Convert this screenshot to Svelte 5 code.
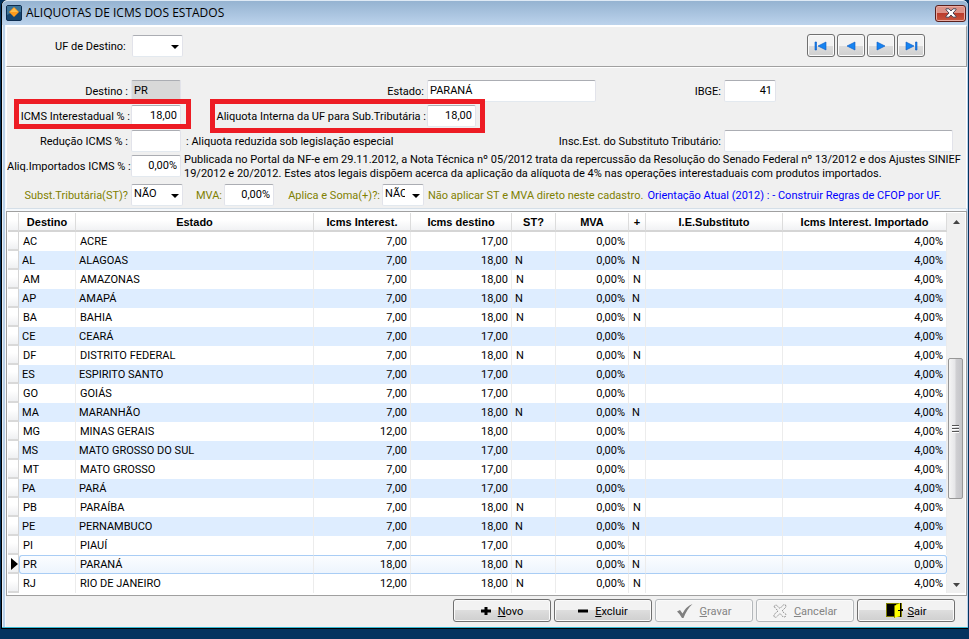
<script>
  const rates = [
    ['AC', 'ACRE', '7,00', '17,00', '', '4,00%'],
    ['AL', 'ALAGOAS', '7,00', '18,00', 'N', '4,00%'],
    ['AM', 'AMAZONAS', '7,00', '18,00', 'N', '4,00%'],
    ['AP', 'AMAPÁ', '7,00', '18,00', 'N', '4,00%'],
    ['BA', 'BAHIA', '7,00', '18,00', 'N', '4,00%'],
    ['CE', 'CEARÁ', '7,00', '17,00', '', '4,00%'],
    ['DF', 'DISTRITO FEDERAL', '7,00', '18,00', 'N', '4,00%'],
    ['ES', 'ESPIRITO SANTO', '7,00', '17,00', '', '4,00%'],
    ['GO', 'GOIÁS', '7,00', '17,00', '', '4,00%'],
    ['MA', 'MARANHÃO', '7,00', '18,00', 'N', '4,00%'],
    ['MG', 'MINAS GERAIS', '12,00', '18,00', '', '4,00%'],
    ['MS', 'MATO GROSSO DO SUL', '7,00', '17,00', '', '4,00%'],
    ['MT', 'MATO GROSSO', '7,00', '17,00', '', '4,00%'],
    ['PA', 'PARÁ', '7,00', '17,00', '', '4,00%'],
    ['PB', 'PARAÍBA', '7,00', '18,00', 'N', '4,00%'],
    ['PE', 'PERNAMBUCO', '7,00', '18,00', 'N', '4,00%'],
    ['PI', 'PIAUÍ', '7,00', '17,00', '', '4,00%'],
    ['PR', 'PARANÁ', '18,00', '18,00', 'N', '0,00%'],
    ['RJ', 'RIO DE JANEIRO', '12,00', '18,00', 'N', '4,00%'],
  ];
  let selected = $state('PR');
</script>

<div class="window">
  <header class="titlebar">
    <svg class="logo" width="16" height="16" viewBox="0 0 16 16" aria-hidden="true">
      <rect x=".5" y=".5" width="15" height="15" rx="1.5" fill="#17456f" stroke="#0c2c50" />
      <path d="M1 1h14v6Q8 5 1 10z" fill="#3c7397" />
      <path d="M8 2l5 5-5 5-5-5z" fill="#ff9a1c" />
      <path d="M8 3l4 4H4z" fill="#ffbd4a" />
    </svg>
    <h1>ALIQUOTAS DE ICMS DOS ESTADOS</h1>
    <button class="close" aria-label="Fechar">
      <svg width="12" height="10" viewBox="0 0 12 10" aria-hidden="true">
        <path d="M1 .8h3L6 3l2-2.200h3v1L8 5l3 3.200v1H8L6 7 4 9.200H1v-1L4 5 1 1.800z" fill="#fff" stroke="#4a4656" />
      </svg>
    </button>
  </header>

  <section class="search">
    <label for="uf">UF de Destino:</label>
    <span class="combo"><select id="uf"><option></option><option>PR</option></select></span>
    <nav>
      <button aria-label="Primeiro"><svg width="14" height="10" viewBox="0 0 14 10"><path d="M1 1h1.500v8H1zM12 1v8L4 5z" /></svg></button>
      <button aria-label="Anterior"><svg width="12" height="10" viewBox="0 0 12 10"><path d="M10 1v8L2 5z" /></svg></button>
      <button aria-label="Próximo"><svg width="12" height="10" viewBox="0 0 12 10"><path d="M2 1v8l8-4z" /></svg></button>
      <button aria-label="Último"><svg width="14" height="10" viewBox="0 0 14 10"><path d="M11.500 1H13v8h-1.500zM2 1v8l8-4z" /></svg></button>
    </nav>
  </section>

  <form class="details" onsubmit={(e) => e.preventDefault()}>
    <label for="destino">Destino :</label>
    <input id="destino" class="locked" value="PR" readonly />
    <label for="estado">Estado:</label>
    <input id="estado" value="PARANÁ" />
    <label for="ibge">IBGE:</label>
    <input id="ibge" class="num code" value="41" />

    <div class="marked first">
      <label for="inter">ICMS Interestadual % :</label>
      <input id="inter" class="num" value="18,00" />
    </div>
    <div class="marked second">
      <label for="interna">Aliquota Interna da UF para Sub.Tributária :</label>
      <input id="interna" class="num" value="18,00" />
    </div>

    <label class="start" for="reducao">Redução ICMS % :</label>
    <input id="reducao" class="num" value="" />
    <div class="split">
      <label for="reducao">: Aliquota reduzida sob legislação especial</label>
      <label for="insc">Insc.Est. do Substituto Tributário:</label>
    </div>
    <input id="insc" value="" />

    <label for="import">Aliq.Importados ICMS % :</label>
    <input id="import" class="num" value="0,00%" />
    <p class="note">Publicada no Portal da NF-e em 29.11.2012, a Nota Técnica nº 05/2012 trata da repercussão da Resolução do Senado Federal nº 13/2012 e dos Ajustes SINIEF<br />19/2012 e 20/2012. Estes atos legais dispõem acerca da aplicação da alíquota de 4% nas operações interestaduais com produtos importados.</p>

    <label class="olive last" for="st">Subst.Tributária(ST)?</label>
    <span class="combo last"><select id="st"><option>NÃO</option><option>SIM</option></select></span>
    <div class="options last">
      <label class="olive mva" for="mva">MVA:</label>
      <input id="mva" class="num" value="0,00%" />
      <label class="olive soma" for="soma">Aplica e Soma(+)?:</label>
      <span class="combo narrow"><select id="soma"><option>NÃO</option><option>SIM</option></select></span>
      <span class="hint olive">Não aplicar ST e MVA direto neste cadastro.</span>
      <span class="hint blue">Orientação Atual (2012) : - Construir Regras de CFOP por UF.</span>
    </div>
  </form>

  <section class="grid">
    <table>
      <colgroup>
        <col class="c-mark" /><col class="c-uf" /><col class="c-state" /><col class="c-inter" /><col class="c-dest" />
        <col class="c-st" /><col class="c-mva" /><col class="c-plus" /><col class="c-ie" /><col class="c-imp" />
      </colgroup>
      <thead>
        <tr>
          <th></th><th>Destino</th><th>Estado</th><th>Icms Interest.</th><th>Icms destino</th>
          <th>ST?</th><th>MVA</th><th>+</th><th>I.E.Substituto</th><th>Icms Interest. Importado</th>
        </tr>
      </thead>
      <tbody>
        {#each rates as [uf, state, inter, dest, st, imported]}
          <tr class:selected={uf === selected} onclick={() => (selected = uf)}>
            <td class="mark">
              {#if uf === selected}
                <svg width="7" height="12" viewBox="0 0 7 12" aria-hidden="true"><path d="M0 0l7 6-7 6z" /></svg>
              {/if}
            </td>
            <td>{uf}</td>
            <td>{state}</td>
            <td class="r">{inter}</td>
            <td class="r">{dest}</td>
            <td>{st}</td>
            <td class="r">0,00%</td>
            <td>{st}</td>
            <td></td>
            <td class="r">{imported}</td>
          </tr>
        {/each}
      </tbody>
    </table>
    <div class="scroll">
      <button class="arrow" aria-label="Rolar para cima"><svg width="7" height="4" viewBox="0 0 7 4"><path d="M0 4l3.500-4L7 4z" /></svg></button>
      <div class="before"></div>
      <button class="thumb" aria-label="Barra de rolagem"><i></i><i></i><i></i></button>
      <div class="after"></div>
      <button class="arrow" aria-label="Rolar para baixo"><svg width="7" height="4" viewBox="0 0 7 4"><path d="M0 0l3.500 4L7 0z" /></svg></button>
    </div>
  </section>

  <footer>
    <button>
      <svg width="10" height="10" viewBox="0 0 10 10"><path d="M3.500 1h3v2.500H10v3H6.500V9h-3V6.500H0v-3h3.500z" /></svg>
      <span><u>N</u>ovo</span>
    </button>
    <button>
      <svg width="10" height="10" viewBox="0 0 10 10"><path d="M0 3.500h10v3H0z" /></svg>
      <span><u>E</u>xcluir</span>
    </button>
    <button disabled>
      <svg width="16" height="14" viewBox="0 0 16 14"><path d="M0 7.500l3-1.500 2.500 3.500Q9 2.500 15.500 0 10 5 6.500 14H5Q3 10 0 7.500z" fill="#808080" /></svg>
      <span><u>G</u>ravar</span>
    </button>
    <button disabled>
      <svg width="14" height="14" viewBox="0 0 14 14"><path d="M1 2.500L3 .8 7 4.500 10.500.800h2L13 3 9 7l4 3.500-.5 2-2 .8L7 9.500l-4 4-2-1L.8 10.800 5 7z" fill="#f4f4f4" stroke="#909090" stroke-dasharray="2 1" /></svg>
      <span><u>C</u>ancelar</span>
    </button>
    <button class="exit">
      <svg width="17" height="15" viewBox="0 0 17 15">
        <path d="M0 0h16v14H0z" fill="#808000" /><path d="M1 1h9v12H1z" />
        <path d="M8 3l6-3v13l-6 2z" fill="#ff0" />
        <path d="M8 3l1-.5v12l-1 .5z" fill="#808000" />
        <path d="M14 0h1v14h-1zM12 7h2v1h-2zM15 6h2v2h-2z" />
      </svg>
      <span><u>S</u>air</span>
    </button>
  </footer>
</div>

<style>
  :global(body) {
    margin: 0;
    min-height: 100vh;
    background: #04335f;
  }
  *, ::before, ::after { box-sizing: border-box; }
  .window {
    margin: 0 1px;
    padding: 0 1px 0 4px;
    border-left: 1px solid #000;
    border-bottom: 1px solid #000;
    border-radius: 6px 6px 0 0;
    background: linear-gradient(90deg, #e8f0f8 0 1px, #b9d1ea 1px 3px, #f6f9fc 3px calc(100% - 2px), #b9d1ea 0);
    box-shadow: inset 0 -1px 0 #35b8d4;
    font: 11px/14px Roboto, "Liberation Sans", Arial, sans-serif;
    color: #000;
  }
  button, input, select {
    font: inherit;
    color: inherit;
    margin: 0;
  }
  .titlebar {
    display: flex;
    align-items: center;
    gap: 4px;
    height: 25px;
    margin: 0 -1px 0 -4px;
    padding: 0 2px 0 4px;
    border-top: 1px solid #dfeaf5;
    border-radius: 6px 6px 0 0;
    background: linear-gradient(#95b3d1, #bcd3ec);
  }
  h1 {
    flex: 1;
    margin: 0;
    font: 12px/16px "Open Sans", "Noto Sans", sans-serif;
  }
  .close {
    display: flex;
    align-items: center;
    justify-content: center;
    width: 31px;
    height: 17px;
    padding: 0;
    border: 1px solid #5a1f1c;
    border-radius: 3px;
    box-shadow: inset 0 0 0 1px #e9aca3;
    background: linear-gradient(#dc9287 0 45%, #b9392a 45%, #c9573f);
  }
  .search {
    display: flex;
    align-items: center;
    gap: 6px;
    height: 42px;
    padding: 0 41px 2px 48px;
    border: solid;
    border-width: 2px 1px 1px;
    border-color: #fff #a0a0a0 #a0a0a0 #fff;
    background: #f0f0f0;
  }
  .search .combo { width: 51px; }
  nav {
    display: flex;
    gap: 2px;
    margin-left: auto;
  }
  nav button, footer button {
    display: flex;
    align-items: center;
    justify-content: center;
    height: 23px;
    padding: 0;
    border: 1px solid #707070;
    border-radius: 3px;
    box-shadow: inset 0 0 0 1px #fafafa;
    background: linear-gradient(#f2f2f2 0 50%, #dddddd 50%, #cfcfcf);
  }
  nav button { width: 28px; }
  nav path { fill: #1683f0; stroke: #0757c4; stroke-width: .6; }
  .details {
    display: grid;
    grid-template-columns: 121px 52px 238fr 169fr 122fr 229fr;
    gap: 3px;
    grid-auto-rows: 22px;
    align-items: center;
    height: 142px;
    padding: 12px 13px 0 0;
    border: 1px solid;
    border-color: #fff #fff #d5dfe8 #fff;
    background: #f0f0f0;
  }
  label, .hint {
    padding-top: 2px;
    text-align: right;
    white-space: nowrap;
  }
  input, select {
    width: 100%;
    min-width: 0;
    height: 22px;
    padding: 0 3px 2px 2px;
    border: 1px solid;
    border-color: #abadb3 #e2e3ea #e3e9ef #e2e3ea;
    border-radius: 2px;
    background: #fff;
    outline: 0;
  }
  select { appearance: none; padding-right: 18px; }
  .details > input.num, .details > .locked { width: 50px; }
  .details > input.code { width: 52px; }
  .num { text-align: right; }
  .locked { background: #d8d8d8; }
  .combo { position: relative; display: block; }
  .combo::after {
    content: "";
    position: absolute;
    right: 4px;
    top: 10px;
    border: 4px solid transparent;
    border-top-color: #000;
    border-bottom: 0;
    pointer-events: none;
  }
  .marked {
    position: relative;
    display: grid;
    align-items: center;
    gap: 3px;
  }
  .marked label { margin-right: -2px; }
  .marked::after {
    content: "";
    position: absolute;
    inset: -6px -8px -2px 7px;
    border: 5px solid #ed1c24;
    pointer-events: none;
  }
  .first { grid-column: 1 / 3; grid-template-columns: 121px 50px; }
  .second { grid-column: 3 / 5; grid-template-columns: 238fr 169fr; }
  .second input { width: 49px; }
  .second::after { inset: -6px auto -6px 24px; width: 275px; }
  .start { grid-column: 1; }
  .split {
    grid-column: 3 / 6;
    display: flex;
    justify-content: space-between;
  }
  .note {
    grid-column: 3 / 7;
    margin: 0 -12px 0 -2px;
    padding-top: 2px;
    white-space: nowrap;
  }
  .last { margin-top: 8px; }
  .options {
    grid-column: 3 / 7;
    display: flex;
    align-items: center;
    white-space: nowrap;
    gap: 2px;
  }
  .options input { width: 50px; }
  .options .mva { width: 36px; }
  .soma { width: 104px; }
  .narrow { width: 42px; }
  .hint { padding-left: 2px; }
  .olive { color: #808000; }
  .blue { color: #00f; }
  .grid {
    display: flex;
    margin-top: 2px;
    padding: 1px 1px 2px 1px;
    border: 1px solid #a0a0a0;
    background: #fff;
  }
  table {
    flex: 1;
    width: 0;
    table-layout: fixed;
    border-collapse: separate;
    border-spacing: 0;
  }
  .c-mark { width: 11px; }
  .c-uf { width: 57px; }
  .c-inter { width: 97px; }
  .c-dest { width: 101px; }
  .c-st { width: 44px; }
  .c-mva { width: 73px; }
  .c-plus { width: 17px; }
  .c-ie { width: 137px; }
  .c-imp { width: 164px; }
  th, td {
    height: 19px;
    padding: 1px 3px 0;
    overflow: hidden;
    white-space: nowrap;
    border-right: 1px solid #ececec;
    text-align: left;
  }
  th {
    padding: 0;
    font-family: "Liberation Sans", Arial, sans-serif;
    text-align: center;
    border-right-color: #dcdcdc;
    border-bottom: 2px solid #d5d5d5;
    background: linear-gradient(#fff 0 40%, #f1f2f4);
  }
  tr:nth-child(even) td { background: #deedff; }
  tr:nth-child(odd) td { padding-left: 4px; }
  tbody .r { text-align: right; }
  tbody tr td.mark {
    padding: 0 0 0 3px;
    border-right-color: #d5d5d5;
    border-bottom: 2px solid #d9d9d9;
    background: linear-gradient(#fff 0 40%, #eff0f2);
  }
  .mark svg { display: block; }
  tr.selected td:not(.mark) {
    border-top: 1px solid #a9cdf5;
    border-bottom: 1px solid #a9cdf5;
    background: linear-gradient(#fbfdff, #edf4fd);
  }
  tr.selected td:nth-child(2) { border-left: 1px solid #a9cdf5; border-radius: 3px 0 0 3px; }
  tr.selected td:nth-child(3) { padding-left: 4px; }
  tr.selected td:last-child { border-right-color: #a9cdf5; border-radius: 0 3px 3px 0; }
  .scroll {
    display: flex;
    flex-direction: column;
    width: 18px;
    background: #f0f0f0;
  }
  .scroll button { padding: 0; border: 0; background: none; }
  .scroll .arrow { height: 17px; }
  .scroll .arrow svg { display: block; margin: 0 auto; fill: #444; }
  .before { flex: 129; }
  .after { flex: 77; }
  .scroll .thumb {
    flex: 140;
    display: flex;
    flex-direction: column;
    align-items: center;
    justify-content: center;
    gap: 1px;
    margin: 0 2px 0 1px;
    border: 1px solid #979797;
    border-radius: 2px;
    background: linear-gradient(90deg, #f5f5f5, #e6e6e8 45%, #cfcfd2 55%, #c4c4c8);
  }
  .thumb i { width: 7px; height: 2px; background: linear-gradient(#555 50%, #fff 50%); }
  footer {
    display: flex;
    justify-content: flex-end;
    gap: 3px;
    padding: 3px 12px 5px;
    margin-bottom: 1px;
    background: #f0f0f0;
  }
  footer button { width: 98px; gap: 7px; }
  footer span { padding-top: 2px; }
  footer button:disabled {
    border-color: #b4b8bb;
    color: #838383;
    background: #f4f4f4;
  }
  footer .exit { gap: 5px; }
</style>
